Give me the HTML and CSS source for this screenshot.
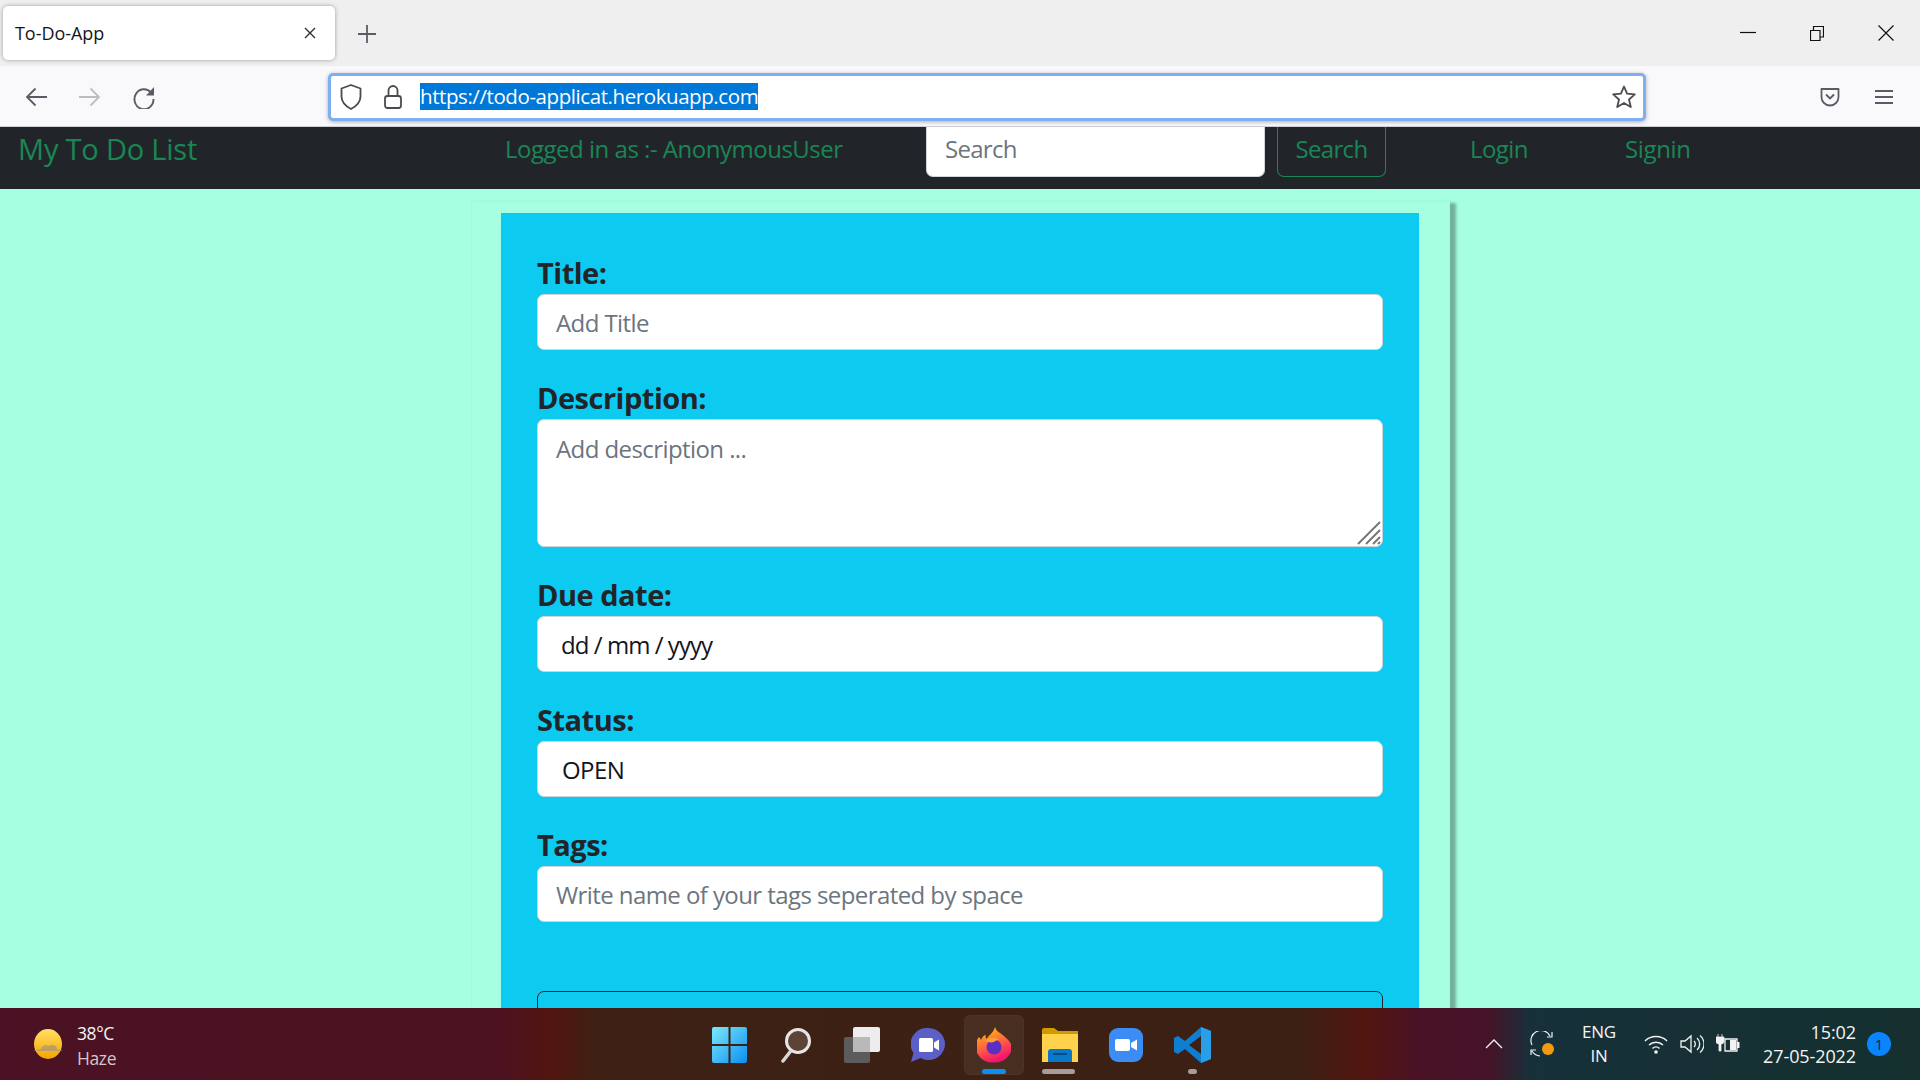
FILE: index.html
```html
<!DOCTYPE html>
<html lang="en">
<head>
<meta charset="utf-8">
<title>To-Do-App</title>
<link rel="stylesheet" href="styles.css">
</head>
<body>
<div class="screen">
  <header class="tabstrip">
    <div class="tab">
      <span class="tab-title">To-Do-App</span>
      <svg class="tab-close" width="12" height="12" viewBox="0 0 12 12"><path d="M1 1l10 10M11 1L1 11" stroke="#2a2a2e" stroke-width="1.300" fill="none"/></svg>
    </div>
    <svg class="new-tab" width="18" height="18" viewBox="0 0 18 18"><path d="M9 0v18M0 9h18" stroke="#5b5b66" stroke-width="1.800" fill="none"/></svg>
    <div class="win-controls">
      <svg width="17" height="16" viewBox="0 0 17 16"><path d="M1 7.500h16" stroke="#111" stroke-width="1.200" fill="none"/></svg>
      <svg width="14" height="16" viewBox="0 0 14 16"><path d="M.5 5.500h9.500v10h-9.500zM3.500 5.500v-4h10v10.500h-3.500" stroke="#111" stroke-width="1.200" fill="none"/></svg>
      <svg width="16" height="16" viewBox="0 0 16 16"><path d="M.5 .5l15 15M15.500 .5l-15 15" stroke="#111" stroke-width="1.200" fill="none"/></svg>
    </div>
  </header>

  <div class="toolbar">
    <div class="nav-icons">
      <svg width="22" height="20" viewBox="0 0 22 20"><path d="M22 10H2M10.500 1.500L2 10l8.500 8.500" stroke="#5b5b66" stroke-width="1.800" fill="none"/></svg>
      <svg width="22" height="20" viewBox="0 0 22 20"><path d="M0 10h20M11.500 1.500L20 10l-8.500 8.500" stroke="#bdbdc4" stroke-width="1.800" fill="none"/></svg>
      <svg width="22" height="24" viewBox="0 0 22 24"><path d="M18 7.500A9.500 10 0 1 0 20.500 14" stroke="#5b5b66" stroke-width="1.900" fill="none"/><path d="M21 2v8.500h-8z" fill="#5b5b66"/></svg>
    </div>
    <div class="urlbar">
      <svg class="ub-shield" width="22" height="26" viewBox="0 0 22 26"><path d="M11 1l9.500 3.500v8c0 5.500-4 9.500-9.500 12.500C5.500 22 1.500 18 1.500 12.500v-8z" stroke="#4a4a52" stroke-width="1.800" fill="none" stroke-linejoin="round"/></svg>
      <svg class="ub-lock" width="18" height="24" viewBox="0 0 18 24"><rect x="1" y="11" width="16" height="12" rx="2.500" stroke="#4a4a52" stroke-width="1.800" fill="none"/><path d="M4.500 11V5.500a4.500 4.500 0 0 1 9 0V11" stroke="#4a4a52" stroke-width="1.800" fill="none"/></svg>
      <span class="url">https://todo-applicat.herokuapp.com</span>
      <svg class="ub-star" width="24" height="24" viewBox="0 0 24 24"><path d="M12 1.500l3.100 7.200 7.700.7-5.800 5.100 1.800 7.500-6.800-4-6.800 4 1.800-7.500L1.200 9.400l7.700-.7z" stroke="#4a4a52" stroke-width="1.800" fill="none" stroke-linejoin="round"/></svg>
    </div>
    <div class="tool-right">
      <svg width="20" height="20" viewBox="0 0 20 20"><path d="M1.500 2h17v8a8.500 8.500 0 0 1-17 0z" stroke="#5b5b66" stroke-width="1.800" fill="none" stroke-linejoin="round"/><path d="M6 7.500l4 4 4-4" stroke="#5b5b66" stroke-width="1.800" fill="none"/></svg>
      <svg width="18" height="16" viewBox="0 0 18 16"><path d="M0 2h18M0 8h18M0 14h18" stroke="#5b5b66" stroke-width="1.800" fill="none"/></svg>
    </div>
  </div>

  <main class="page">
    <nav class="navbar">
      <a class="brand">My To Do List</a>
      <span class="nav-user">Logged in as :- AnonymousUser</span>
      <input class="nav-search" type="text" placeholder="Search">
      <button class="nav-btn" type="button">Search</button>
      <a class="nav-login">Login</a>
      <a class="nav-signin">Signin</a>
    </nav>
    <section class="container">
      <form class="card">
        <label class="lbl">Title:</label>
        <input class="field" type="text" placeholder="Add Title">
        <label class="lbl">Description:</label>
        <div class="area-wrap">
          <textarea class="field area" placeholder="Add description ..."></textarea>
          <svg class="grip" width="24" height="24" viewBox="0 0 24 24"><path d="M1 23L23 1M9 23L23 9M16 23l7-7M21 23l2-2" stroke="#777" stroke-width="2" fill="none"/></svg>
        </div>
        <label class="lbl">Due date:</label>
        <input class="field dark date" type="text" value="dd / mm / yyyy">
        <label class="lbl">Status:</label>
        <input class="field dark status" type="text" value="OPEN">
        <label class="lbl">Tags:</label>
        <input class="field" type="text" placeholder="Write name of your tags seperated by space">
        <button class="submit" type="button"></button>
      </form>
    </section>
  </main>

  <footer class="taskbar">
    <div class="weather">
      <svg width="30" height="32" viewBox="0 0 30 32"><defs><linearGradient id="sun" x1="0" y1="0" x2="0" y2="1"><stop offset="0" stop-color="#ffe066"/><stop offset="1" stop-color="#f7a400"/></linearGradient></defs><ellipse cx="15" cy="16" rx="14" ry="15" fill="url(#sun)"/><path d="M0 23h30l-6-2c0-4-5-5-8-3-3-2-8 0-8 3z" fill="#b49a6c" opacity=".85"/></svg>
      <div class="w-text"><span class="w-temp">38°C</span><span class="w-desc">Haze</span></div>
    </div>
    <div class="apps">
      <div class="app app-start"><svg width="35" height="36" viewBox="0 0 35 36"><defs><linearGradient id="win" x1="0" y1="0" x2="1" y2="1"><stop offset="0" stop-color="#7de8fb"/><stop offset="1" stop-color="#0a8ff0"/></linearGradient></defs><path d="M0 2a2 2 0 0 1 2-2h14.500v17H0zM18.500 0H33a2 2 0 0 1 2 2v15H18.500zM0 19h16.500v17H2a2 2 0 0 1-2-2zM18.500 19H35v15a2 2 0 0 1-2 2H18.500z" fill="url(#win)"/></svg></div>
      <div class="app"><svg width="30" height="36" viewBox="0 0 30 36"><circle cx="17" cy="14" r="11.500" fill="#5b4338" stroke="#e6e6e6" stroke-width="3"/><path d="M9 25l-7 9" stroke="#d8d8d8" stroke-width="3.500" stroke-linecap="round"/></svg></div>
      <div class="app"><svg width="36" height="36" viewBox="0 0 36 36"><rect x="0" y="10" width="26" height="26" rx="2" fill="#5c5c5c"/><rect x="9" y="0" width="27" height="25" rx="2" fill="#ededed"/><rect x="9" y="10" width="17" height="15" fill="#b9b9b9"/></svg></div>
      <div class="app"><svg width="34" height="36" viewBox="0 0 34 36"><path d="M17.500 1a16.500 16 0 1 1-8 30L0 35l2.500-9A16.500 16 0 0 1 17.500 1z" fill="#5b5fc7"/><rect x="8" y="11" width="14" height="14" rx="1.500" fill="#fff"/><path d="M23 15.500l5-3v11l-5-3z" fill="#fff"/></svg></div>
      <div class="app"><span class="app-tile"><svg width="34" height="36" viewBox="0 0 34 36"><defs><linearGradient id="ff" x1="0" y1="0" x2="0.400" y2="1"><stop offset="0" stop-color="#ffd000"/><stop offset=".5" stop-color="#ff7139"/><stop offset="1" stop-color="#f5156c"/></linearGradient></defs><path d="M17 35.500A17 16 0 0 1 2 10c1 1 1.500 2 2 3 1-3 3-5 5-5-1 2 0 3 1 4 1-4 6-5 8-12 1 3 2 4 5 6 6 4 12 10 12 14a17 16.500 0 0 1-17 15.500z" fill="url(#ff)"/><circle cx="17" cy="20" r="7.500" fill="#5a2fc2"/><path d="M8 14c3-4 11-4 14-1-3 0-4 1-5 2-3 1-6 0-9-1z" fill="#ffa033"/></svg></span></div>
      <div class="app"><svg width="36" height="34" viewBox="0 0 36 34"><path d="M0 2a2 2 0 0 1 2-2h10l4 3h20v31H0z" fill="#d39a00"/><rect x="0" y="6" width="36" height="28" fill="#ffd24c"/><path d="M6 34V24a3 3 0 0 1 3-3h18a3 3 0 0 1 3 3v10z" fill="#0a78c8"/><rect x="11" y="25" width="14" height="2" fill="#054c86"/></svg></div>
      <div class="app"><svg width="34" height="34" viewBox="0 0 34 34"><rect x="0" y="0" width="34" height="34" rx="9" fill="#3c8cf5"/><rect x="6" y="11" width="15" height="12" rx="2" fill="#fff"/><path d="M22 15l6-3.500v11L22 19z" fill="#fff"/></svg></div>
      <div class="app"><svg width="37" height="36" viewBox="0 0 37 36"><path d="M27 0l10 4v28l-10 4L11 22l-7 5-4-2v-14l4-2 7 5z" fill="#0e7fd0"/><path d="M27 9L15 18l12 9z" fill="#3c2015"/><path d="M27 0l10 4v28l-10 4z" fill="#2a9fe8"/></svg></div>
      <span class="pip pip-ff"></span>
      <span class="pip pip-folder"></span>
      <span class="pip pip-code"></span>
    </div>
    <div class="tray">
      <svg class="t-chev" width="18" height="10" viewBox="0 0 18 10"><path d="M1 9l8-8 8 8" stroke="#f2f2f2" stroke-width="1.300" fill="none"/></svg>
      <svg class="t-sync" width="26" height="26" viewBox="0 0 26 26"><path d="M3 14A10 10 0 0 1 21 5M23 1v5h-5M3 20a10 10 0 0 0 8 5M2 24v-5h5" stroke="#f2f2f2" stroke-width="1.200" fill="none"/><circle cx="19" cy="18" r="6" fill="#f59a0c"/></svg>
      <div class="t-lang"><span>ENG</span><span>IN</span></div>
      <div class="t-icons">
        <svg width="24" height="20" viewBox="0 0 24 20"><path d="M1 7a16 16 0 0 1 22 0M5 11a10 10 0 0 1 14 0M8.500 14.500a5 5 0 0 1 7 0" stroke="#f2f2f2" stroke-width="1.500" fill="none"/><circle cx="12" cy="18" r="1.800" fill="#f2f2f2"/></svg>
        <svg width="24" height="20" viewBox="0 0 24 20"><path d="M1 7h4l6-5v16l-6-5H1z" stroke="#f2f2f2" stroke-width="1.300" fill="none"/><path d="M14 7a4 4 0 0 1 0 6M17 4a8 8 0 0 1 0 12M20 1.500a11 11 0 0 1 0 17" stroke="#f2f2f2" stroke-width="1.300" fill="none"/></svg>
        <svg width="24" height="20" viewBox="0 0 24 20"><path d="M9 5h12v12H9z" stroke="#f2f2f2" stroke-width="1.300" fill="none"/><rect x="14" y="6" width="6" height="10" fill="#f2f2f2"/><rect x="21" y="8" width="2.500" height="6" fill="#f2f2f2"/><path d="M2 0v3M6 0v3M0 3h8v4a3 3 0 0 1-3 3v7H3v-7a3 3 0 0 1-3-3z" fill="#f2f2f2" stroke="#f2f2f2" stroke-width=".8"/></svg>
      </div>
      <div class="t-clock"><span>15:02</span><span>27-05-2022</span></div>
      <span class="t-badge">1</span>
    </div>
  </footer>
</div>
</body>
</html>
```

FILE: styles.css
```css
* { box-sizing: border-box; }
html, body { margin: 0; height: 100%; }
body { font-family: "Open Sans", "Noto Sans", sans-serif; overflow: hidden; }
.screen { width: 1920px; height: 1080px; display: flex; flex-direction: column; overflow: hidden; }

/* tab strip */
.tabstrip { height: 66px; flex: none; background: #efefef; display: flex; align-items: flex-start; padding: 6px 26px 0 3px; }
.tab { width: 332px; height: 54px; background: #fff; border-radius: 5px; box-shadow: 0 0 4px rgba(0,0,0,.35); display: flex; align-items: center; justify-content: space-between; padding: 0 19px 0 12px; }
.tab-title { font-size: 18px; letter-spacing: -.05px; color: #15141a; }
.new-tab { margin: 19px 0 0 23px; }
.win-controls { margin-left: auto; display: flex; align-items: center; gap: 54px; padding-top: 19px; }

/* toolbar */
.toolbar { height: 61px; flex: none; background: #f9f9fb; border-bottom: 1px solid #cfcfd8; display: flex; align-items: center; padding: 1px 27px 0 25px; }
.nav-icons { display: flex; align-items: center; gap: 32px; width: 303px; }
.urlbar { width: 1318px; height: 48px; background: #fff; border: 3px solid #7eaff0; border-radius: 5px; box-shadow: 0 1px 4px rgba(0,0,0,.3); display: flex; align-items: center; padding: 0 7px 0 0; }
.ub-shield { margin-left: 9px; }
.ub-lock { margin-left: 22px; }
.url { margin-left: 18px; background: #0078d7; color: #fff; font-size: 20.500px; line-height: 27px; letter-spacing: -.42px; white-space: nowrap; }
.ub-star { margin-left: auto; }
.tool-right { margin-left: auto; display: flex; align-items: center; gap: 35px; }

/* page */
.page { flex: 1; min-height: 0; background: #a5ffe0; overflow: hidden; }
.navbar { height: 62px; background: #212529; display: flex; align-items: flex-start; color: #198754; font-size: 24px; line-height: 44px; padding-left: 18px; }
.navbar a, .navbar span { white-space: nowrap; }
.brand { font-size: 29px; line-height: 44px; letter-spacing: -.2px; width: 487px; }
.nav-user { width: 421px; letter-spacing: -.49px; }
.nav-search { width: 339px; height: 50px; background: #fff; border: 1px solid #ced4da; border-top: 0; border-radius: 0 0 7px 7px; font: inherit; letter-spacing: -.7px; padding: 0 18px 6px; outline: none; }
.nav-search::placeholder { color: #6c757d; opacity: 1; }
.nav-btn { width: 109px; height: 50px; margin-left: 12px; background: transparent; border: 1px solid #198754; border-top: 0; border-radius: 0 0 7px 7px; color: #198754; font: inherit; letter-spacing: -.65px; padding: 0 0 6px; }
.nav-login { margin-left: 84px; letter-spacing: -.55px; width: 155px; }
.nav-signin { letter-spacing: -.35px; }

.container { width: 979px; height: 900px; margin: 12px 0 0 471px; padding: 11px 30px 0 29px; border: 1px solid rgba(0,0,0,.02); box-shadow: 6px 2px 3px #72b19c; }
.card { background: #0dcaf0; padding: 42px 36px 0; height: 900px; display: flex; flex-direction: column; }
.lbl { display: block; font-size: 29px; line-height: 36px; font-weight: 700; color: #212529; letter-spacing: -.5px; margin: 30px 0 3px; }
.lbl:first-child { margin-top: 0; }
.field { display: block; width: 100%; height: 56px; flex: none; background: #fff; border: 1px solid #ced4da; border-radius: 7px; font-family: inherit; font-size: 24px; letter-spacing: -.58px; padding: 0 18px; outline: none; color: #6c757d; }
.field::placeholder { color: #6c757d; opacity: 1; }
.dark { color: #15141a; }
.date { padding-left: 23px; letter-spacing: -.95px; }
.status { padding-left: 24px; }
.area-wrap { position: relative; height: 128px; flex: none; }
.area { height: 128px; resize: none; padding-top: 12px; }
.grip { position: absolute; right: 2px; bottom: 2px; }
.submit { display: block; flex: none; height: 60px; margin-top: 69px; background: transparent; border: 1px solid #212529; border-radius: 7px; }

/* taskbar */
.taskbar { height: 72px; flex: none; color: #f4f4f4; display: flex; align-items: center; background: linear-gradient(90deg, #4a1224 0, #4c1220 500px, #52150f 550px, #3e2114 600px, #3d2014 1300px, #521510 1365px, #4a1226 1420px, #451328 1490px, #17303a 1530px, #15302f 100%); }
.weather { width: 697px; flex: none; display: flex; align-items: center; padding-left: 33px; gap: 14px; }
.w-text { display: flex; flex-direction: column; font-size: 17.500px; line-height: 25px; letter-spacing: -.4px; padding-top: 3px; }
.w-desc { color: #d5c4c9; }
.apps { display: flex; width: 528px; flex: none; position: relative; height: 72px; align-items: center; }
.app { width: 66px; height: 60px; flex: none; display: flex; align-items: center; justify-content: center; padding-top: 1px; }
.app-start { padding-right: 2px; }
.app-tile { width: 60px; height: 60px; display: flex; align-items: center; justify-content: center; border-radius: 6px; background: rgba(255,255,255,.06); box-shadow: inset 0 0 0 1px rgba(255,255,255,.03); }
.pip { position: absolute; bottom: 6px; height: 5px; border-radius: 3px; }
.pip-ff { left: 285px; width: 24px; background: #0a8ff5; }
.pip-folder { left: 345px; width: 33px; background: #a89c98; }
.pip-code { left: 491px; width: 9px; background: #a89c98; }
.tray { flex: 1; display: flex; align-items: center; height: 72px; padding-left: 260px; }
.t-chev { margin-right: 26px; }
.t-sync { margin-right: 22px; }
.t-lang { width: 44px; display: flex; flex-direction: column; align-items: center; font-size: 17px; line-height: 24px; letter-spacing: -.2px; }
.t-icons { display: flex; gap: 12px; margin-left: 23px; }
.t-clock { width: 110px; margin-left: 6px; display: flex; flex-direction: column; align-items: flex-end; font-size: 18px; line-height: 24px; letter-spacing: -.1px; }
.t-badge { width: 24px; height: 24px; margin-left: 11px; border-radius: 50%; background: #0a84ff; color: #10233a; font-size: 15px; line-height: 24px; text-align: center; }
```
